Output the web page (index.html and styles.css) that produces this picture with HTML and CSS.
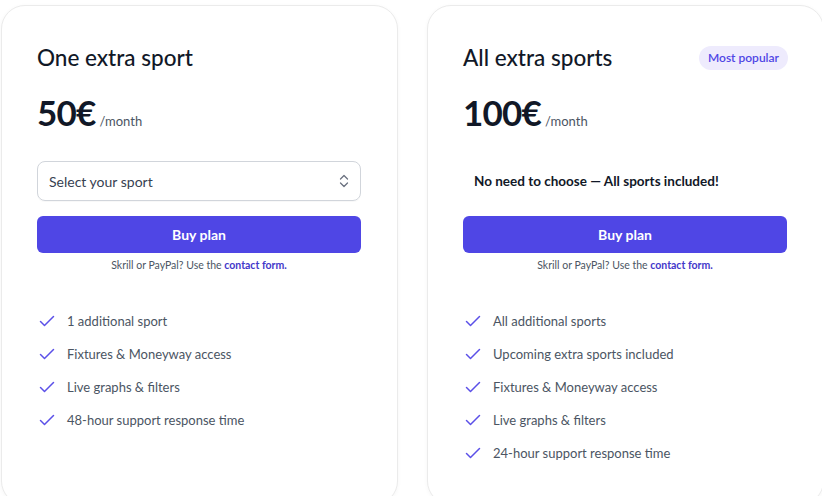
FILE: index.html
```html
<!DOCTYPE html>
<html lang="en">
<head>
<meta charset="utf-8">
<title>Pricing</title>
<link rel="stylesheet" href="styles.css">
</head>
<body>
<div class="plans">
  <section class="card">
    <div class="head">
      <h2 class="title">One extra sport</h2>
    </div>
    <p class="price"><span class="amount">50€</span><span class="per">/month</span></p>
    <div class="select">
      <span>Select your sport</span>
      <svg class="chev" width="12" height="16" viewBox="0 0 12 16" fill="none" stroke="#6b7280" stroke-width="1.3" stroke-linecap="round" stroke-linejoin="round"><path d="M2.5 6 6 2.5 9.5 6"/><path d="M2.5 10 6 13.5 9.5 10"/></svg>
    </div>
    <button class="buy">Buy plan</button>
    <p class="note">Skrill or PayPal? Use the <a href="#">contact form.</a></p>
    <ul class="features">
      <li><svg class="check" width="16" height="12" viewBox="0 0 16 12" fill="none" stroke="#5b50e8" stroke-width="1.5" stroke-linecap="round" stroke-linejoin="round"><path d="M1.5 6.5 5.5 10.5 14.5 1.5"/></svg>1 additional sport</li>
      <li><svg class="check" width="16" height="12" viewBox="0 0 16 12" fill="none" stroke="#5b50e8" stroke-width="1.5" stroke-linecap="round" stroke-linejoin="round"><path d="M1.5 6.5 5.5 10.5 14.5 1.5"/></svg>Fixtures &amp; Moneyway access</li>
      <li><svg class="check" width="16" height="12" viewBox="0 0 16 12" fill="none" stroke="#5b50e8" stroke-width="1.5" stroke-linecap="round" stroke-linejoin="round"><path d="M1.5 6.5 5.5 10.5 14.5 1.5"/></svg>Live graphs &amp; filters</li>
      <li><svg class="check" width="16" height="12" viewBox="0 0 16 12" fill="none" stroke="#5b50e8" stroke-width="1.5" stroke-linecap="round" stroke-linejoin="round"><path d="M1.5 6.5 5.5 10.5 14.5 1.5"/></svg>48-hour support response time</li>
    </ul>
  </section>
  <section class="card">
    <div class="head">
      <h2 class="title">All extra sports</h2>
      <span class="badge">Most popular</span>
    </div>
    <p class="price"><span class="amount">100€</span><span class="per">/month</span></p>
    <div class="included">No need to choose — All sports included!</div>
    <button class="buy">Buy plan</button>
    <p class="note">Skrill or PayPal? Use the <a href="#">contact form.</a></p>
    <ul class="features">
      <li><svg class="check" width="16" height="12" viewBox="0 0 16 12" fill="none" stroke="#5b50e8" stroke-width="1.5" stroke-linecap="round" stroke-linejoin="round"><path d="M1.5 6.5 5.5 10.5 14.5 1.5"/></svg>All additional sports</li>
      <li><svg class="check" width="16" height="12" viewBox="0 0 16 12" fill="none" stroke="#5b50e8" stroke-width="1.5" stroke-linecap="round" stroke-linejoin="round"><path d="M1.5 6.5 5.5 10.5 14.5 1.5"/></svg>Upcoming extra sports included</li>
      <li><svg class="check" width="16" height="12" viewBox="0 0 16 12" fill="none" stroke="#5b50e8" stroke-width="1.5" stroke-linecap="round" stroke-linejoin="round"><path d="M1.5 6.5 5.5 10.5 14.5 1.5"/></svg>Fixtures &amp; Moneyway access</li>
      <li><svg class="check" width="16" height="12" viewBox="0 0 16 12" fill="none" stroke="#5b50e8" stroke-width="1.5" stroke-linecap="round" stroke-linejoin="round"><path d="M1.5 6.5 5.5 10.5 14.5 1.5"/></svg>Live graphs &amp; filters</li>
      <li><svg class="check" width="16" height="12" viewBox="0 0 16 12" fill="none" stroke="#5b50e8" stroke-width="1.5" stroke-linecap="round" stroke-linejoin="round"><path d="M1.5 6.5 5.5 10.5 14.5 1.5"/></svg>24-hour support response time</li>
    </ul>
  </section>
</div>
</body>
</html>
```
FILE: styles.css
```css
* { box-sizing: border-box; }
html, body {
  margin: 0;
  background: #ffffff;
  font-family: Lato, "Liberation Sans", sans-serif;
  color: #111827;
  overflow: hidden;
}
.plans {
  display: flex;
  gap: 29px;
  padding: 5px 0 0 1px;
}
.card {
  width: 397px;
  height: 500px;
  flex: none;
  background: #fff;
  border: 1px solid #ebebeb;
  border-radius: 24px;
  box-shadow: 0 1px 4px rgba(0,0,0,0.04);
  padding: 38px 36px 0 35px;
}
.head {
  display: flex;
  align-items: center;
  justify-content: space-between;
  height: 28px;
}
.title {
  margin: 0;
  font-size: 22.5px;
  font-weight: 500;
  line-height: 28px;
  color: #111827;
}
.badge {
  background: #eeebfd;
  color: #4f46e5;
  font-size: 12px;
  font-weight: 600;
  line-height: 16px;
  padding: 4px 9px 4px 9px;
  border-radius: 999px;
  margin-right: -1px;
}
.price {
  margin: 20px 0 0;
  display: flex;
  align-items: baseline;
  height: 40px;
}
.amount {
  font-size: 35px;
  font-weight: 700;
  line-height: 40px;
  color: #111827;
  letter-spacing: -0.8px;
}
.per {
  font-size: 13px;
  color: #4b5563;
  margin-left: 4px;
}
.select {
  margin-top: 29px;
  height: 40px;
  border: 1px solid #d1d5db;
  border-radius: 8px;
  display: flex;
  align-items: center;
  justify-content: space-between;
  padding: 0 10px 0 11px;
  font-size: 14px;
  color: #374151;
  box-shadow: 0 1px 1px rgba(0,0,0,0.03);
}
.chev { display: block; }
.included {
  margin-top: 29px;
  height: 40px;
  display: flex;
  align-items: center;
  padding-left: 11px;
  font-size: 13.5px;
  font-weight: 700;
  color: #111827;
}
.buy {
  display: block;
  width: 100%;
  margin-top: 15px;
  height: 37px;
  border: 0;
  border-radius: 6px;
  background: #4f46e5;
  color: #fff;
  font-family: inherit;
  font-size: 14px;
  font-weight: 700;
}
.note {
  margin: 5px 0 0;
  text-align: center;
  font-size: 10.5px;
  line-height: 14px;
  color: #4b5563;
}
.note a {
  color: #4338ca;
  font-weight: 700;
  text-decoration: none;
}
.features {
  list-style: none;
  margin: 39px 0 0;
  padding: 0;
  display: flex;
  flex-direction: column;
  gap: 13px;
}
.features li {
  display: flex;
  align-items: center;
  height: 20px;
  font-size: 13px;
  color: #4b5563;
}
.check {
  flex: none;
  margin: 0 12px 0 2px;
}
```
